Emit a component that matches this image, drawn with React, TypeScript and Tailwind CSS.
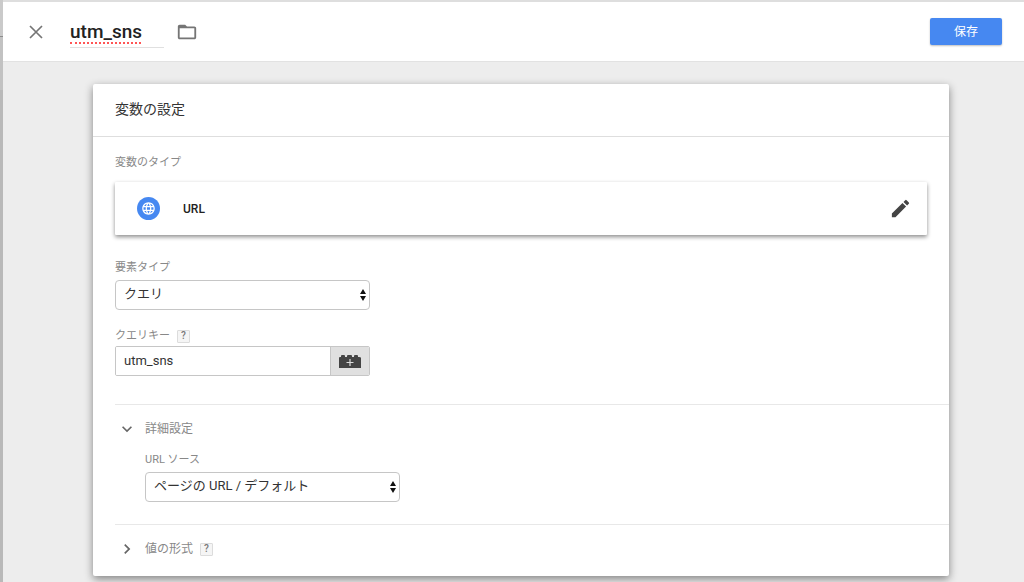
import { useState } from 'react'
import type { ReactNode } from 'react'
import { MdEdit, MdFolderOpen, MdKeyboardArrowDown, MdKeyboardArrowRight, MdLanguage } from 'react-icons/md'

function CloseIcon() {
  return (
    <svg viewBox="0 0 14 14" className="size-3.5" fill="none" stroke="currentColor" strokeWidth="1.7">
      <path d="M1 1l12 12M13 1L1 13" />
    </svg>
  )
}

function BrickIcon() {
  return (
    <svg viewBox="0 0 22 14" className="h-3.5 w-[22px]">
      <path
        fill="#444"
        d="M0 14V4q0-1 1-1h1V2q0-1 1-1h2q1 0 1 1v1h2V2q0-1 1-1h3q1 0 1 1v1h2V2q0-1 1-1h2q1 0 1 1v1h1q2 0 2 1v10z"
      />
      <path d="M11 5v7M7.500 8.500h7" stroke="#ddd" strokeWidth="1.200" />
    </svg>
  )
}

function Help() {
  return (
    <button
      type="button"
      aria-label="ヘルプ"
      className="ml-[7px] flex size-[13px] items-center justify-center rounded-[1px] border border-[#dcdcdc] bg-[#f5f5f5] text-[10px] leading-none font-medium text-[#777]"
    >
      ?
    </button>
  )
}

function Select({ id, options }: { id: string; options: string[] }) {
  return (
    <div className="relative w-[255px]">
      <select
        id={id}
        className="block h-[30px] w-full appearance-none rounded border border-[#c6c6c6] bg-white pr-6 pb-0.5 pl-2 text-[13px] text-[#333]"
      >
        {options.map((o) => (
          <option key={o}>{o}</option>
        ))}
      </select>
      <svg viewBox="0 0 6 12" className="pointer-events-none absolute top-[9px] right-1 h-3 w-1.5" fill="#111">
        <path d="M3 0l3 5H0zM3 12l3-5H0z" />
      </svg>
    </div>
  )
}

function Section({ title, open, onToggle, help, children }: {
  title: string
  open: boolean
  onToggle: () => void
  help?: boolean
  children?: ReactNode
}) {
  const Arrow = open ? MdKeyboardArrowDown : MdKeyboardArrowRight
  return (
    <section className="ml-[22px] border-t border-[#e8e8e8] pt-3.5">
      <div className="flex items-center">
        <button type="button" onClick={onToggle} className="flex h-5 items-center gap-2 pl-0.5 text-xs text-[#888]">
          <Arrow className="size-5 text-[#666]" />
          {title}
        </button>
        {help && <Help />}
      </div>
      {open && <div className="pt-[13px] pb-[22px] pl-[30px]">{children}</div>}
    </section>
  )
}

export default function App() {
  const [advanced, setAdvanced] = useState(true)
  const [format, setFormat] = useState(false)

  return (
    <div className="flex min-h-screen bg-[#ededed] font-['Roboto','Noto_Sans_CJK_JP',sans-serif] text-[#222]">
      {/* Edge of the page behind the sheet */}
      <div className="flex w-[3px] shrink-0 flex-col bg-[#b9b9b9]">
        <div className="h-[37px] border-b border-[#8c8c8c] bg-[#cacaca]" />
        <div className="h-[53px] bg-[#c2c2c2]" />
      </div>

      <div className="min-w-0 flex-1">
        <header className="flex h-[62px] items-center border-t-2 border-b border-t-[#dedede] border-b-[#e2e2e2] bg-white pr-[22px] pl-[26px]">
          <button type="button" aria-label="閉じる" className="text-[#757575]">
            <CloseIcon />
          </button>
          <div className="relative ml-[27px] w-[94px]">
            <input
              aria-label="変数名"
              defaultValue="utm_sns"
              spellCheck={false}
              className="block h-8 w-full border-b border-[#e0e0e0] bg-transparent text-[19px] font-medium outline-none"
            />
            {/* Misspelling mark */}
            <span className="pointer-events-none absolute bottom-1 left-0 w-[71px] border-b-2 border-dotted border-[#f55]" />
          </div>
          <button type="button" aria-label="フォルダ" className="ml-3 text-[#757575]">
            <MdFolderOpen className="size-[22px]" />
          </button>
          <button
            type="button"
            className="ml-auto h-[27px] w-[72px] rounded-[2px] bg-[#4688f1] text-xs text-white shadow-[0_1px_2px_rgba(0,0,0,0.25)]"
          >
            保存
          </button>
        </header>

        <main className="mt-[22px] mr-[75px] mb-1 ml-[90px] rounded-[2px] bg-white shadow-[0_3px_8px_rgba(0,0,0,0.45)]">
          <h2 className="border-b border-[#dedede] px-[22px] pt-[15px] pb-[17px] text-sm leading-5 text-[#333]">変数の設定</h2>

          <div className="px-[22px] pt-[18px] pb-7">
            <h3 className="text-[11px] leading-4 text-[#888]">変数のタイプ</h3>
            <div className="mt-[11px] flex h-[53px] items-center rounded-[1px] pr-[15px] pl-[22px] shadow-[0_2px_4px_rgba(0,0,0,0.45)]">
              <span className="flex size-[23px] items-center justify-center rounded-full bg-[#4688f1] text-white">
                <MdLanguage className="size-[15px]" />
              </span>
              <span className="ml-[23px] text-xs font-medium">URL</span>
              <button type="button" aria-label="編集" className="ml-auto text-[#444]">
                <MdEdit className="size-[23px]" />
              </button>
            </div>

            <label htmlFor="component" className="mt-[25px] mb-1 block text-[11px] leading-4 text-[#888]">
              要素タイプ
            </label>
            <Select id="component" options={['クエリ', 'ホスト名', 'パス']} />

            <div className="mt-[18px] mb-0.5 flex items-center text-[11px] leading-4 text-[#888]">
              <label htmlFor="key">クエリキー</label>
              <Help />
            </div>
            <div className="flex h-[30px] w-[255px] overflow-hidden rounded-[2px] border border-[#c6c6c6]">
              <input
                id="key"
                defaultValue="utm_sns"
                className="min-w-0 flex-1 bg-white px-2 text-[13px] text-[#333] outline-none"
              />
              <button
                type="button"
                aria-label="変数を追加"
                className="flex w-[39px] items-center justify-center border-l border-[#c6c6c6] bg-[#e0e0e0]"
              >
                <BrickIcon />
              </button>
            </div>
          </div>

          <Section title="詳細設定" open={advanced} onToggle={() => setAdvanced(!advanced)}>
            <label htmlFor="source" className="mb-1 block text-[11px] leading-4 text-[#888]">
              URL ソース
            </label>
            <Select id="source" options={['ページの URL / デフォルト']} />
          </Section>
          <div className="pb-[17px]">
            <Section title="値の形式" open={format} onToggle={() => setFormat(!format)} help />
          </div>
        </main>
      </div>
    </div>
  )
}
